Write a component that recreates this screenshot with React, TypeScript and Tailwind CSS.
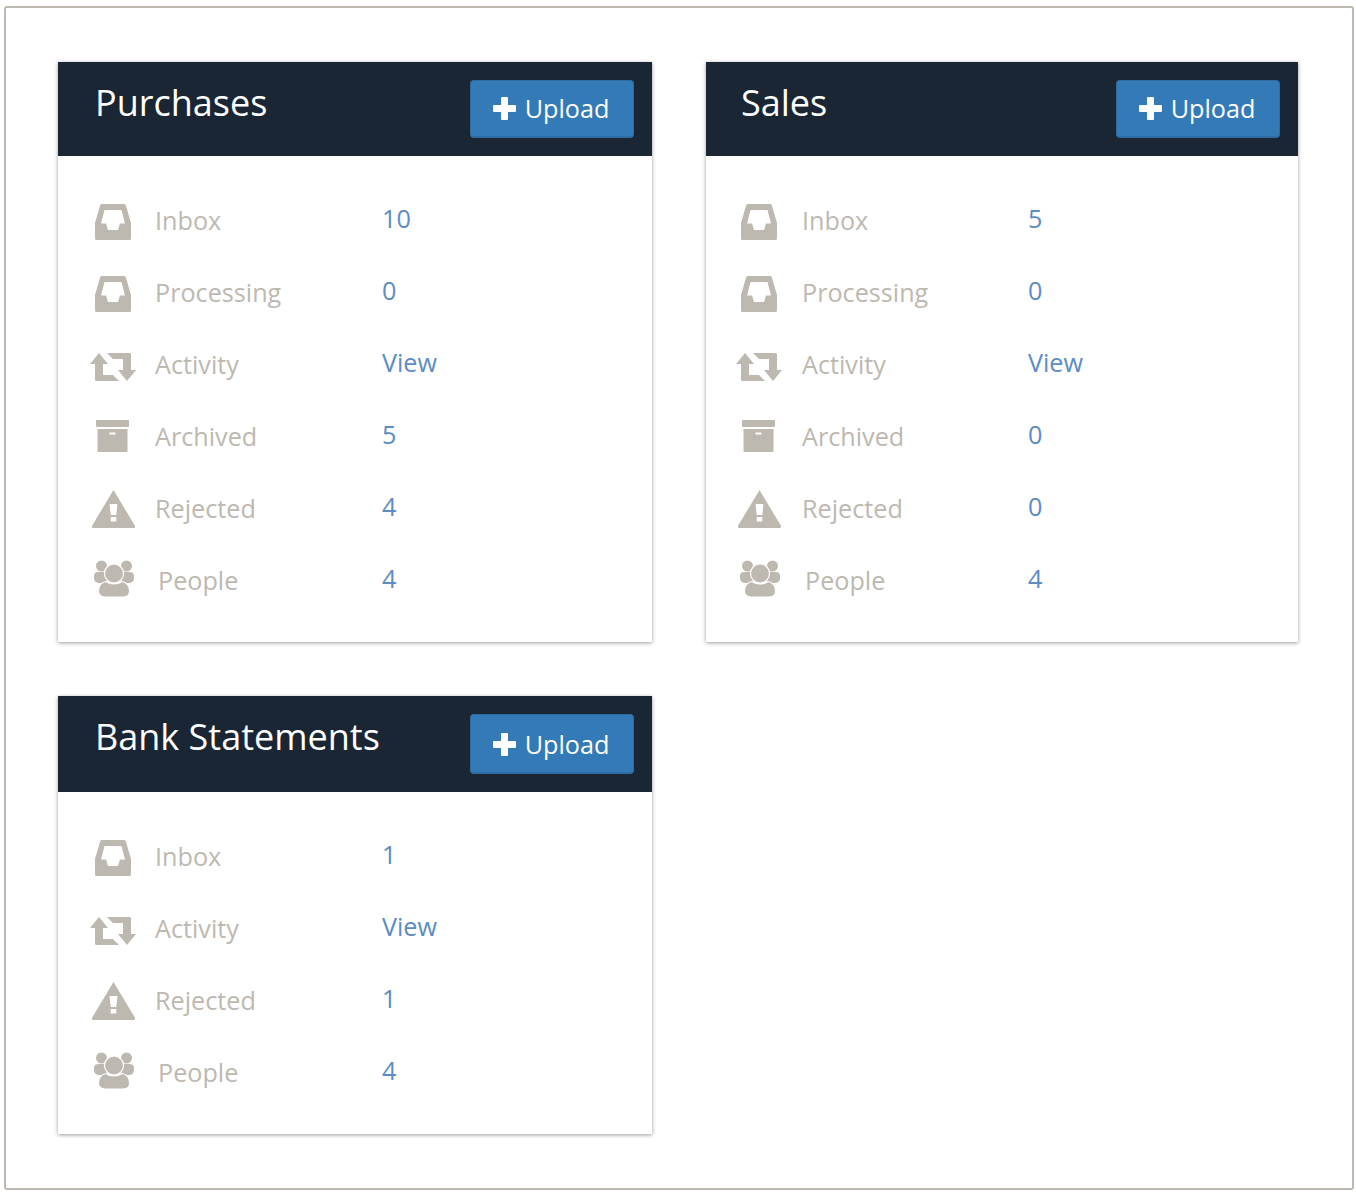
const iconClass = "fill-[#bdb8b0]";

function InboxIcon() {
  return (
    <svg viewBox="0 0 36 36" className={`w-[36px] h-[36px] mt-[2px] ${iconClass}`}>
      <path
        fillRule="evenodd"
        d="M7 0h22a2 2 0 0 1 1.800 1.300L36 19v15.500a1.500 1.500 0 0 1-1.500 1.500h-33A1.500 1.500 0 0 1 0 34.500V19L5.200 1.300A2 2 0 0 1 7 0zm2.500 6L6 19.500h5L13 26h10l2-6.500h5L26.500 6h-17z"
      />
    </svg>
  );
}

function ActivityIcon() {
  return (
    <svg viewBox="0 0 46 28" className={`w-[46px] h-[28px] mt-[4px] ${iconClass}`}>
      <path d="M9 0l9 11h-5v11h10l6 6H6.500A1.500 1.500 0 0 1 5 26.500V11H0L9 0z" />
      <path d="M37 28l-9-11h5V6H23l-6-6h22.500A1.500 1.500 0 0 1 41 1.500V17h5L37 28z" />
    </svg>
  );
}

function ArchivedIcon() {
  return (
    <svg viewBox="0 0 33 32" className={`w-[33px] h-[32px] mb-[3px] mr-[2px] ${iconClass}`}>
      <path d="M1 0h31a1 1 0 0 1 1 1v5a1 1 0 0 1-1 1H1a1 1 0 0 1-1-1V1a1 1 0 0 1 1-1z" />
      <path fillRule="evenodd" d="M1.500 9h30v22a1 1 0 0 1-1 1h-28a1 1 0 0 1-1-1V9zm12 3.500v2h6v-2h-6z" />
    </svg>
  );
}

function RejectedIcon() {
  return (
    <svg viewBox="0 0 43 38" className={`w-[43px] h-[38px] ${iconClass}`}>
      <path
        fillRule="evenodd"
        d="M21.500 0l21.300 35.500a1.600 1.600 0 0 1-1.300 2.500h-40a1.600 1.600 0 0 1-1.300-2.500L21.500 0zM17.500 14l1.200 11h5.600l1.200-11h-8zm1.200 13v4.500h5.600V27h-5.600z"
      />
    </svg>
  );
}

function PeopleIcon() {
  return (
    <svg viewBox="0 0 40 37" className={`w-[40px] h-[37px] mb-[5px] ml-[2px] ${iconClass}`}>
      <circle cx="7.500" cy="6" r="5.500" />
      <circle cx="32.500" cy="6" r="5.500" />
      <path d="M0 15.500c0-2.500 2-3.500 4.500-3.500H11l3 11H6c-4 0-6-2-6-5v-2.500z" />
      <path d="M40 15.500c0-2.500-2-3.500-4.500-3.500H29l-3 11h8c4 0 6-2 6-5v-2.500z" />
      <circle cx="20" cy="13.500" r="9.500" stroke="white" strokeWidth="1.200" />
      <path
        stroke="white"
        strokeWidth="1.200"
        d="M12 21.500c2 1.500 5 2.500 8 2.500s6-1 8-2.500c4 .5 7.500 4 7.500 8.500v1.500c0 3-2.500 5.500-6.500 5.500H11c-4 0-6.500-2.500-6.500-5.500V30c0-4.500 3.500-8 7.500-8.500z"
      />
    </svg>
  );
}

function PlusIcon() {
  return (
    <svg viewBox="0 0 23 23" className="w-[23px] h-[23px] fill-white shrink-0">
      <path d="M9 0h5a1 1 0 0 1 1 1v7h7a1 1 0 0 1 1 1v5a1 1 0 0 1-1 1h-7v7a1 1 0 0 1-1 1H9a1 1 0 0 1-1-1v-7H1a1 1 0 0 1-1-1V9a1 1 0 0 1 1-1h7V1a1 1 0 0 1 1-1z" />
    </svg>
  );
}

const icons = {
  inbox: InboxIcon,
  activity: ActivityIcon,
  archived: ArchivedIcon,
  rejected: RejectedIcon,
  people: PeopleIcon,
};

interface Row {
  label: string;
  value: string;
  icon: keyof typeof icons;
}

interface CardProps {
  title: string;
  rows: Row[];
  narrow?: boolean;
  tall?: boolean;
}

function Card({ title, rows, narrow, tall }: CardProps) {
  return (
    <div className="bg-white shadow-[0_1px_4px_rgba(0,0,0,0.4)]">
      <div className={`bg-[#1a2634] flex justify-between pr-[18px] py-[18px] ${narrow ? "pl-[35px]" : "pl-[37px]"}`}>
        <h2 className="text-[36px] leading-[46px] text-white">{title}</h2>
        <button
          className={`flex items-center gap-[9px] w-[164px] justify-center pr-[2px] bg-[#337ab7] border border-b-2 border-[#2e6da4] rounded-[4px] text-white text-[25.2px] ${tall ? "h-[60px] pt-[2px]" : "h-[58px]"}`}
        >
          <PlusIcon />
          Upload
        </button>
      </div>
      <div className="pt-[29px] pb-[25px]">
        {rows.map((row) => {
          const Icon = icons[row.icon];
          return (
            <div key={row.label} className="flex items-center h-[72px]">
              <div className={`shrink-0 flex justify-center ${narrow ? "w-[96px] pl-[10px]" : "w-[97px] pl-[13px]"}`}>
                <Icon />
              </div>
              <span
                className={`shrink-0 text-[25.2px] text-[#bdb8b0] ${narrow ? "w-[226px]" : "w-[227px]"} ${row.icon === "people" ? "pl-[3px]" : ""}`}
              >
                {row.label}
              </span>
              <span className="text-[25.2px] text-[#5b8cc4] pb-[4px]">{row.value}</span>
            </div>
          );
        })}
      </div>
    </div>
  );
}

export default function App() {
  return (
    <div className="w-[1356px] h-[1196px] bg-white pt-[6px] pl-[4px] font-['Open_Sans',sans-serif]">
      <div className="w-[1350px] h-[1184px] border-2 border-[#bdb8b0] rounded-[3px] pt-[54px] pl-[52px]">
        <div className="grid grid-cols-[594px_592px] gap-[54px] items-start">
          <Card
            title="Purchases"
            rows={[
              { label: "Inbox", value: "10", icon: "inbox" },
              { label: "Processing", value: "0", icon: "inbox" },
              { label: "Activity", value: "View", icon: "activity" },
              { label: "Archived", value: "5", icon: "archived" },
              { label: "Rejected", value: "4", icon: "rejected" },
              { label: "People", value: "4", icon: "people" },
            ]}
          />
          <Card
            title="Sales"
            narrow
            rows={[
              { label: "Inbox", value: "5", icon: "inbox" },
              { label: "Processing", value: "0", icon: "inbox" },
              { label: "Activity", value: "View", icon: "activity" },
              { label: "Archived", value: "0", icon: "archived" },
              { label: "Rejected", value: "0", icon: "rejected" },
              { label: "People", value: "4", icon: "people" },
            ]}
          />
          <Card
            title="Bank Statements"
            tall
            rows={[
              { label: "Inbox", value: "1", icon: "inbox" },
              { label: "Activity", value: "View", icon: "activity" },
              { label: "Rejected", value: "1", icon: "rejected" },
              { label: "People", value: "4", icon: "people" },
            ]}
          />
        </div>
      </div>
    </div>
  );
}
